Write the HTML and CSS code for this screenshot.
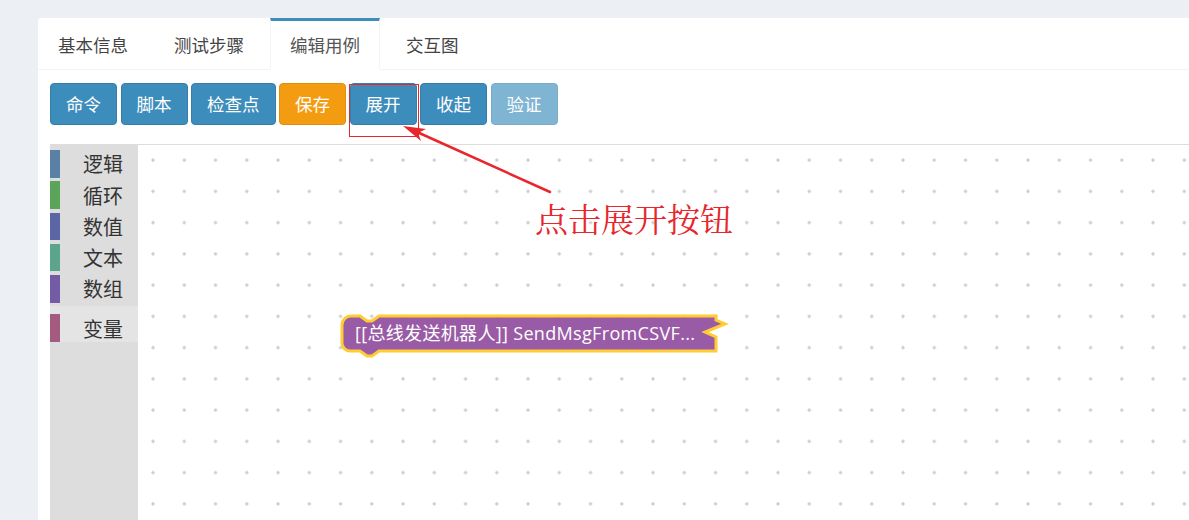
FILE: index.html
```html
<!DOCTYPE html>
<html>
<head>
	<meta charset="utf-8">
	<link rel="stylesheet" href="styles.css">
</head>
<body>
	<div class="page">
		<div class="card">
			<ul class="tabs">
				<li>基本信息</li>
				<li>测试步骤</li>
				<li class="active">编辑用例</li>
				<li>交互图</li>
			</ul>

			<div class="pane">
				<div class="toolbar">
					<button class="btn">命令</button>
					<button class="btn">脚本</button>
					<button class="btn">检查点</button>
					<button class="btn btn-warning">保存</button>
					<button class="btn">展开</button>
					<button class="btn">收起</button>
					<button class="btn disabled">验证</button>
				</div>

				<div class="workspace">
					<div class="toolbox">
						<div class="cat"><span class="bar logic"></span><span class="label">逻辑</span></div>
						<div class="cat"><span class="bar loop"></span><span class="label">循环</span></div>
						<div class="cat"><span class="bar math"></span><span class="label">数值</span></div>
						<div class="cat"><span class="bar text"></span><span class="label">文本</span></div>
						<div class="cat"><span class="bar list"></span><span class="label">数组</span></div>
						<div class="var-group">
							<div class="cat"><span class="bar vars"></span><span class="label">变量</span></div>
						</div>
					</div>

					<div class="canvas">
						<svg class="block" width="420" height="70" viewBox="0 0 420 70">
							<path d="M 12,21 A 9,9 0 0 1 21,12 H 30 l 7,5 h 5 l 7,-5 H 386 V 16 l 9,4 -20,8 11,5 V 47 H 49 l -7,5 h -5 l -7,-5 H 20 A 8,8 0 0 1 12,39 Z"
								fill="#995ba5" stroke="#fc3" stroke-width="3" stroke-linejoin="miter"/>
							<text x="25" y="36" textLength="340" lengthAdjust="spacing" class="block-text">[[总线发送机器人]] SendMsgFromCSVF...</text>
						</svg>
					</div>
				</div>
			</div>
		</div>

		<!-- annotation on top of the screenshot -->
		<div class="mark-box"></div>
		<svg class="mark-arrow" width="1189" height="520">
			<line x1="550" y1="192" x2="417" y2="132" stroke="#e8262c" stroke-width="2.5" stroke-linecap="round"/>
			<polygon points="403,126 426,129 418,133 421,141" fill="#e8262c"/>
		</svg>
		<div class="mark-text">点击展开按钮</div>
	</div>
</body>
</html>
```

FILE: styles.css
```css
html, body {
	height: 100%;
}

body {
	margin: 0;
	background: #ecf0f5;
	overflow: hidden;
	font-family: "Noto Sans CJK SC", "Open Sans", sans-serif;
}

.page {
	position: relative;
	height: 100%;
	padding: 18px 0 0 38px;
	box-sizing: border-box;
}

.card {
	background: #fff;
	border-radius: 4px 0 0 0;
	height: 100%;
	display: flex;
	flex-direction: column;
}

/* tabs */
.tabs {
	list-style: none;
	margin: 0;
	padding: 0;
	display: flex;
	border-bottom: 1px solid #f4f4f4;
}

.tabs li {
	padding: 0 19px;
	border: 1px solid transparent;
	border-top: 3px solid transparent;
	line-height: 48px;
	font-size: 17.5px;
	color: #444;
	margin-right: 6px;
	margin-bottom: -1px;
}

.tabs li.active {
	border-top-color: #3c8dbc;
	border-left-color: #f4f4f4;
	border-right-color: #f4f4f4;
	border-bottom-color: #fff;
	color: #555;
}

.pane {
	flex: 1;
	display: flex;
	flex-direction: column;
	padding: 13px 0 0 12px;
}

/* buttons */
.toolbar {
	display: flex;
	gap: 3.5px;
}

.btn {
	font-family: "Noto Sans CJK SC", sans-serif;
	font-size: 17.5px;
	color: #fff;
	background: #3c8dbc;
	border: 1px solid #367fa9;
	border-radius: 4px;
	height: 42px;
	line-height: 40px;
	padding: 0 15px;
	margin: 0;
}

.btn-warning {
	background: #f39c12;
	border-color: #e08e0b;
}

.btn.disabled {
	opacity: .65;
}

/* blockly area */
.workspace {
	flex: 1;
	display: flex;
	margin-top: 19px;
	border-top: 1px solid #ddd;
}

.toolbox {
	width: 88px;
	background: #ddd;
	padding-top: 5px;
}

.cat {
	display: flex;
	align-items: center;
	height: 27.5px;
	margin-bottom: 3.75px;
}

.bar {
	width: 10px;
	height: 100%;
}

.label {
	margin-left: 23px;
	font-size: 20px;
	color: #333;
}

.logic { background: #5b80a5; }
.loop { background: #5ba55b; }
.math { background: #5b67a5; }
.text { background: #5ba58c; }
.list { background: #745ba5; }
.vars { background: #a55b80; }

.var-group {
	margin-top: 2px;
	padding-top: 8px;
	background: #e4e4e4;
}

.var-group .cat {
	margin-bottom: 0;
}

.canvas {
	position: relative;
	flex: 1;
	background-color: #fff;
	background-image: radial-gradient(circle, #ccc 1.3px, transparent 1.9px);
	background-size: 31.25px 31.25px;
	background-position: -0.6px -0.5px;
}

.block {
	position: absolute;
	left: 192px;
	top: 159px;
}

.block-text {
	fill: #fff;
	font-family: "Open Sans", "Noto Sans CJK SC", sans-serif;
	font-size: 18px;
}

/* red annotation */
.mark-box {
	position: absolute;
	left: 349px;
	top: 84px;
	width: 68px;
	height: 51px;
	border: 1px solid #e8262c;
}

.mark-arrow {
	position: absolute;
	left: 0;
	top: 0;
}

.mark-text {
	position: absolute;
	left: 535px;
	top: 201px;
	font-family: "Noto Serif CJK SC", "Noto Sans CJK SC", serif;
	font-size: 33px;
	line-height: 33px;
	color: #e8262c;
}
```
